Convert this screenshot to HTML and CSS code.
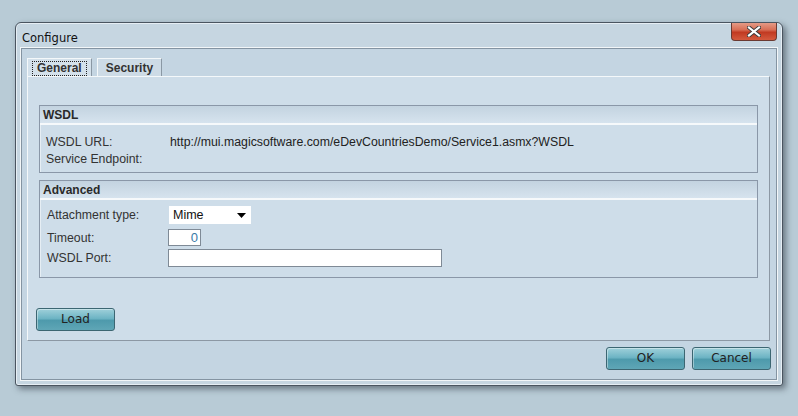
FILE: index.html
```html
<!DOCTYPE html>
<html>
<head>
<meta charset="utf-8">
<link rel="stylesheet" href="styles.css">
</head>
<body>
<div class="window">
  <div class="titlebar">
    <span class="title">Configure</span>
    <div class="close"><svg width="14" height="11" viewBox="0 0 14 11"><path d="M2 1.5 L12 9.5 M12 1.5 L2 9.5" stroke="#3a3a3a" stroke-width="4" stroke-linecap="square"/><path d="M2 1.5 L12 9.5 M12 1.5 L2 9.5" stroke="#fff" stroke-width="2.2" stroke-linecap="square"/></svg></div>
  </div>
  <div class="client">
    <div class="tabs">
      <div class="tab active"><span class="focus">General</span></div>
      <div class="tab">Security</div>
    </div>
    <div class="panel">
      <div class="group wsdl">
        <div class="ghead">WSDL</div>
        <div class="rows">
          <div class="row"><span class="lbl">WSDL URL:</span><span class="val">http://mui.magicsoftware.com/eDevCountriesDemo/Service1.asmx?WSDL</span></div>
          <div class="row"><span class="lbl">Service Endpoint:</span></div>
        </div>
      </div>
      <div class="group adv">
        <div class="ghead">Advanced</div>
        <div class="rows2">
          <div class="frow"><span class="lbl2">Attachment type:</span><div class="combo"><span>Mime</span><svg width="9" height="5" viewBox="0 0 9 5"><path d="M0 0 H9 L4.5 5 Z" fill="#000"/></svg></div></div>
          <div class="frow"><span class="lbl2">Timeout:</span><div class="num">0</div></div>
          <div class="frow"><span class="lbl2">WSDL Port:</span><div class="text"></div></div>
        </div>
      </div>
      <div class="loadrow"><div class="btn load">Load</div></div>
    </div>
    <div class="btnrow">
      <div class="btn">OK</div>
      <div class="btn">Cancel</div>
    </div>
  </div>
</div>
</body>
</html>
```
FILE: styles.css
```css
html, body { margin: 0; padding: 0; }
body {
  width: 798px; height: 416px; overflow: hidden;
  background: #b8cbd6;
  font-family: "Liberation Sans", Arial, sans-serif;
  font-size: 12.3px;
  color: #222;
}
.window {
  margin: 22px 0 0 15px;
  border: 1px solid #4a5560;
  border-radius: 6px 6px 3px 3px;
  background: #c6d6e1;
  box-shadow: 3px 3px 6px rgba(40,50,60,0.55), inset 0 0 0 1px #e6eef4;
  padding: 0 5px 5px 5px;
  box-sizing: border-box;
  width: 768px; height: 364px;
  display: flex; flex-direction: column;
}
.titlebar {
  height: 25px; display: flex; align-items: flex-start;
  flex: none;
}
.title {
  font-family: "DejaVu Sans", sans-serif; font-size: 11.5px; color: #111;
  margin: 8px 0 0 1px;
}
.close {
  margin-left: auto; margin-right: 0px;
  width: 46px; height: 18px;
  border: 1px solid #6a3a32; border-top: none;
  border-radius: 0 0 4px 4px;
  background: linear-gradient(#e59a86 0%, #d86e55 40%, #c13a22 55%, #d45a3e 100%);
  display: flex; align-items: center; justify-content: center;
  box-sizing: border-box;
}
.client {
  flex: 1;
  border: 1px solid #8494a2;
  box-shadow: 0 0 0 1px #f2f6f8;
  background: #c4d5e2;
  display: flex; flex-direction: column;
  padding: 9px 6px 8px 5px;
}
.tabs { display: flex; height: 18px; padding-left: 0; gap: 5px; }
.tab {
  height: 18px; box-sizing: border-box;
  border: 1px solid #8a98a4; border-bottom: none;
  border-left-color: #f4f8fa; border-top-color: #f4f8fa;
  background: #cddbe6;
  font-weight: bold; font-size: 12px; color: #333;
  padding: 2px 8px 0 8px;
  position: relative;
}
.tab.active { padding: 2px 4px 0 4px; background: #d4e1eb; }
.tab .focus { border: 1px dotted #222; padding: 0 4px; display: inline-block; line-height: 13px; }
.panel {
  height: 265px; box-sizing: border-box;
  border: 1px solid #8c98a4; border-top-color: #f4f8fa; border-left-color: #f4f8fa;
  background: #cedde9;
  padding: 28px 11px 0 11px;
  display: flex; flex-direction: column;
}
.group {
  border: 1px solid #8a97a8;
  box-shadow: inset 1px 1px 0 #e6eef4;
}
.ghead {
  height: 17px; border-bottom: 2px solid #f6f9fb;
  background: linear-gradient(#c3d3e0, #d6e3ee);
  font-weight: bold; color: #2a2a2a; font-size: 12px;
  padding-left: 3px; line-height: 19px;
}
.wsdl { height: 68px; box-sizing: border-box; }
.rows { padding: 9px 0 0 6px; }
.row { height: 17px; line-height: 17px; display: flex; color: #333; }
.lbl { width: 124px; }
.val { color: #222; }
.adv { height: 98px; box-sizing: border-box; margin-top: 7px; }
.rows2 { padding: 6px 0 0 7px; }
.frow { display: flex; align-items: center; color: #333; }
.lbl2 { width: 122px; }
.combo {
  width: 82px; height: 18px; background: #fff; box-sizing: border-box;
  display: flex; align-items: center; justify-content: space-between;
  padding: 0 5px 0 4px; color: #111; font-size: 12.5px;
}
.frow:nth-child(1) { height: 18px; margin-bottom: 5px; }
.frow:nth-child(2) { height: 17px; margin-bottom: 3px; }
.num {
  width: 33px; height: 17px; box-sizing: border-box; background: #fff;
  border: 1px solid #7f8a96; text-align: right; padding-right: 2px;
  color: #3a7aa8; line-height: 15px; font-size: 13px;
  margin-left: -1px;
}
.text {
  width: 274px; height: 18px; box-sizing: border-box; background: #fff;
  border: 1px solid #7f8a96; margin-left: -1px;
}
.loadrow { margin-top: 30px; margin-left: -3px; }
.btn {
  width: 79px; height: 23px; box-sizing: border-box;
  border: 1px solid #3c6672; border-radius: 3px;
  background: linear-gradient(#9fd0da 0%, #6db4c4 45%, #4e9aac 55%, #5fa6b6 100%);
  box-shadow: inset 1px 1px 0 rgba(255,255,255,0.4);
  text-align: center; line-height: 21px;
  font-family: "DejaVu Sans", sans-serif; font-size: 12px; color: #222;
}
.btnrow { display: flex; justify-content: flex-end; gap: 7px; margin-top: 6px; margin-right: -1px; }
```
